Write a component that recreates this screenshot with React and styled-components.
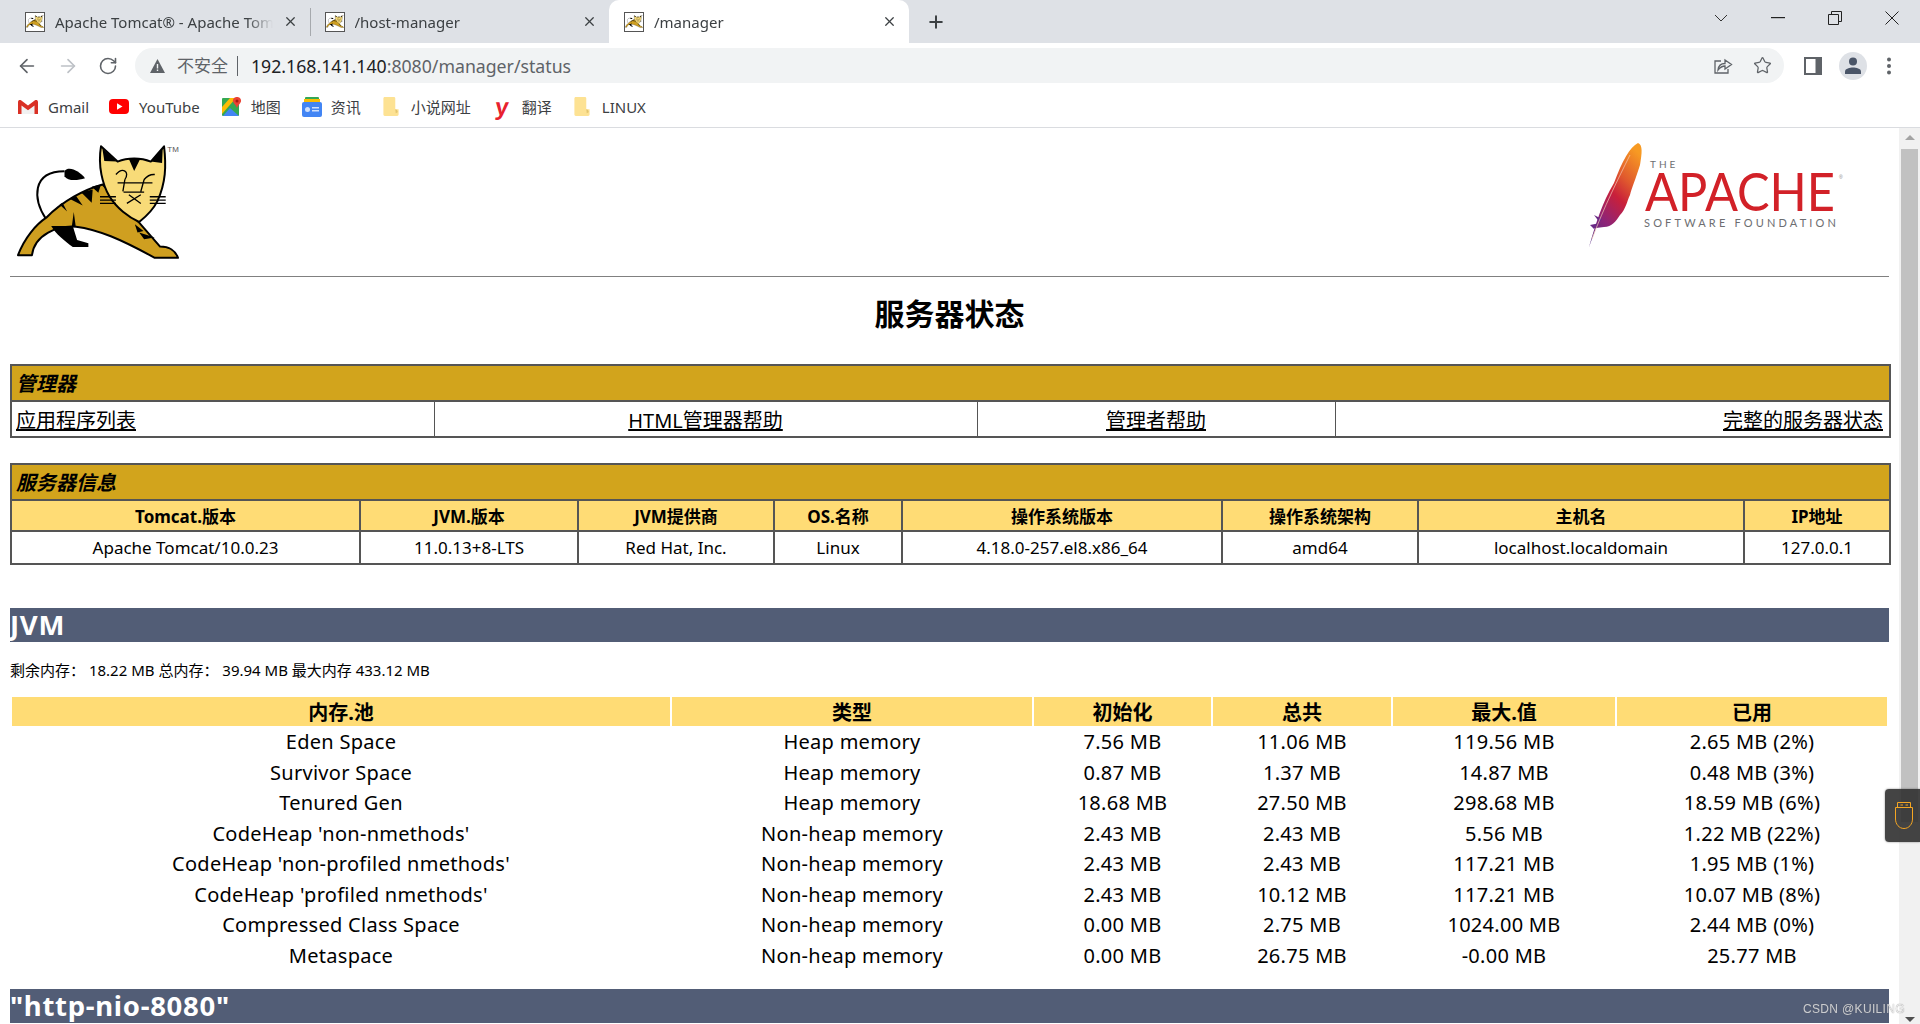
import React from 'react';
import styled, { createGlobalStyle } from 'styled-components';
import { ArrowLeft, ArrowRight, RotateCw, Star, Plus, X } from 'lucide-react';

const UI_FONT = `"Noto Sans", "Noto Sans CJK SC", sans-serif`;

const GlobalStyle = createGlobalStyle`
    html, body {
        margin: 0;
        padding: 0;
        height: 100%;
        overflow: hidden;
        background: #fff;
        font-family: ${UI_FONT};
        color: #000;
    }
`;

const Window = styled.div`
    position: relative;
    width: 1920px;
    height: 1024px;
    display: flex;
    flex-direction: column;
    overflow: hidden;
`;

/* browser chrome */
const TabStrip = styled.div`
    height: 43px;
    flex: none;
    display: flex;
    align-items: stretch;
    padding-left: 10px;
    background: #dee1e6;
`;
const Tab = styled.div`
    width: 299.5px;
    box-sizing: border-box;
    display: flex;
    align-items: center;
    padding: 0 12px 0 15px;
    gap: 10px;
    border-radius: 10px 10px 0 0;
    background: ${props => props.$active ? '#fff' : 'transparent'};
`;
const TabDivider = styled.span`
    width: 1px;
    height: 28px;
    align-self: center;
    margin-right: -1px;
    background: #a6a9ad;
`;
const Favicon = styled.span`
    width: 20px;
    height: 20px;
    flex: none;
    box-sizing: border-box;
    border: 1px solid #555;
    background: #fff;
    display: flex;
    align-items: center;
    justify-content: center;
    overflow: hidden;
`;
const TabTitle = styled.span`
    flex: 1;
    font-size: 15px;
    color: #3c4043;
    white-space: nowrap;
    overflow: hidden;
    -webkit-mask-image: linear-gradient(to right, #000 88%, transparent);
    mask-image: linear-gradient(to right, #000 88%, transparent);
`;
const TabClose = styled(X)`
    width: 15px;
    height: 15px;
    flex: none;
    color: #3c4043;
`;
const NewTab = styled(Plus)`
    width: 20px;
    height: 20px;
    margin: 12px 0 0 17px;
    color: #3c4043;
    stroke-width: 2.4;
`;
const WindowControls = styled.div`
    margin-left: auto;
    display: flex;
    align-items: flex-start;
`;
const WindowButton = styled.span`
    width: 57px;
    height: 36px;
    display: flex;
    align-items: center;
    justify-content: center;
    color: #222;
`;

const Toolbar = styled.div`
    height: 46px;
    flex: none;
    display: flex;
    align-items: center;
    box-sizing: border-box;
    padding: 0 0 1px 16px;
    background: #fff;
`;
const NavIcon = styled.span`
    width: 41px;
    display: flex;
    color: ${props => props.$off ? '#bdc1c6' : '#5f6368'};
`;
const AddressBar = styled.div`
    width: 1649px;
    height: 35px;
    margin-left: -4px;
    box-sizing: border-box;
    display: flex;
    align-items: center;
    padding: 0 12px 0 15px;
    border-radius: 18px;
    background: #f1f3f4;
`;
const Insecure = styled.span`
    margin-left: 12px;
    padding-right: 9px;
    font-size: 17px;
    color: #5f6368;
    border-right: 1px solid #5f6368;
    line-height: 20px;
`;
const Url = styled.span`
    margin-left: 13px;
    font-size: 17.7px;
    color: #5f6368;
    b {
        font-weight: 400;
        color: #202124;
    }
`;
const BarActions = styled.div`
    margin-left: auto;
    display: flex;
    align-items: center;
    gap: 20px;
    color: #5f6368;
`;
const ToolActions = styled.div`
    display: flex;
    align-items: center;
    color: #5f6368;
    margin-left: 20px;
`;
const Avatar = styled.span`
    width: 28px;
    height: 28px;
    margin: 0 19px 0 17px;
    border-radius: 50%;
    background: #dee1e6;
    display: flex;
    align-items: center;
    justify-content: center;
`;

const BookmarkBar = styled.div`
    height: 39px;
    flex: none;
    box-sizing: border-box;
    display: flex;
    align-items: center;
    padding: 0 0 3px 18px;
    background: #fff;
    border-bottom: 1px solid #dadce0;
`;
const Bookmark = styled.span`
    display: flex;
    align-items: center;
    gap: ${props => props.$gap || 10}px;
    margin-right: ${props => props.$after || 21}px;
    font-size: 15px;
    color: #3c4043;
    white-space: nowrap;
`;
const YoudaoMark = styled.span`
    width: 18px;
    text-align: center;
    font: 900 24px/20px "Liberation Sans", sans-serif;
    color: #e8212d;
    transform: skewX(-6deg);
`;

/* page */
const Viewport = styled.div`
    flex: 1;
    min-height: 0;
    display: flex;
`;
const Page = styled.main`
    flex: 1;
    min-width: 0;
    padding: 0 10px;
    overflow: hidden;
`;
const Scrollbar = styled.div`
    width: 21px;
    flex: none;
    position: relative;
    background: #f1f1f1;
    display: flex;
    flex-direction: column;
    align-items: center;
`;
const ScrollArrow = styled.span`
    width: 0;
    height: 0;
    border-left: 5px solid transparent;
    border-right: 5px solid transparent;
    margin-top: ${props => props.$down ? 'auto' : '7px'};
    margin-bottom: ${props => props.$down ? '2px' : '0'};
    ${props => props.$down
        ? 'border-top: 5px solid #505050;'
        : 'border-bottom: 5px solid #a3a3a3;'}
`;
const ScrollThumb = styled.span`
    width: 17px;
    height: 673px;
    margin-top: 9px;
    background: #c1c1c1;
`;
const LogoRow = styled.header`
    height: 148px;
    display: flex;
    justify-content: space-between;
    align-items: flex-start;
    padding: 15px 39px 0 6px;
    box-sizing: border-box;
`;
const Rule = styled.hr`
    margin: 0;
    border: 0;
    height: 1px;
    background: #808080;
`;
const Title = styled.h1`
    margin: 22px 0 35px;
    font-size: 30px;
    line-height: 30px;
    font-weight: 700;
    text-align: center;
`;
const BoxTable = styled.table`
    width: 100%;
    table-layout: fixed;
    border-collapse: collapse;
    border: 2px solid #555;
    margin-bottom: ${props => props.$after}px;
`;
const Band = styled.td`
    height: 36px;
    padding: 2px 4px 0;
    box-sizing: border-box;
    background: #d2a41c;
    border: 1px solid #555;
    border-bottom-width: 2px;
    font-size: 20px;
    font-weight: 700;
    font-style: italic;
    line-height: 1;
`;
const LinkCell = styled.td`
    height: 34px;
    padding: 0 ${props => props.$align === 'right' ? 6 : 4}px 0 4px;
    border: 1px solid #555;
    font-size: 20px;
    text-align: ${props => props.$align || 'center'};
    a {
        color: #000;
        text-decoration: underline;
    }
`;
const InfoHead = styled.td`
    height: 29px;
    padding: 0 4px;
    background: #ffdc75;
    border: 1px solid #555;
    border-width: 1px 2px 2px 1px;
    font-size: 17px;
    font-weight: 700;
    text-align: center;
`;
const InfoCell = styled.td`
    height: 31px;
    padding: 0 4px;
    border: 1px solid #555;
    border-right-width: 2px;
    font-size: 17px;
    text-align: center;
`;
const SectionBar = styled.h2`
    margin: 0;
    height: 34px;
    background: #525d76;
    color: #fff;
    font-size: 27.5px;
    line-height: 33px;
    font-weight: 700;
    letter-spacing: 0.7px;
    white-space: nowrap;
`;
const MemorySummary = styled.p`
    margin: 0;
    height: 55px;
    display: flex;
    align-items: center;
    white-space: pre;
    font-size: 15px;
`;
const MemoryTable = styled.table`
    width: 100%;
    table-layout: fixed;
    border-collapse: separate;
    border-spacing: 2px 0;
    margin-bottom: 19px;
`;
const Col = styled.col`
    width: ${props => props.$w}px;
`;
const MemoryHead = styled.th`
    height: 29px;
    padding: 0;
    background: #ffdc75;
    font-size: 20px;
    font-weight: 700;
    text-align: center;
`;
const MemoryCell = styled.td`
    height: 30.5px;
    padding: 2px 0 0;
    box-sizing: border-box;
    font-size: 20px;
    line-height: 1;
    letter-spacing: 0.28px;
    text-align: center;
    white-space: nowrap;
`;

/* things over the page */
const UsbWidget = styled.div`
    position: absolute;
    top: 789px;
    right: 0;
    width: 35px;
    height: 53px;
    display: flex;
    align-items: center;
    padding-left: 10px;
    box-sizing: border-box;
    background: rgba(48, 48, 48, 0.9);
    border-radius: 4px 0 0 4px;
    box-shadow: 0 0 2px rgba(0, 0, 0, 0.5);
`;
const Watermark = styled.div`
    position: absolute;
    right: 15px;
    bottom: 7px;
    font: 12px/16px "Liberation Sans", sans-serif;
    letter-spacing: 0.35px;
    color: #e8e8e8;
    text-shadow: 0 0 1px #555;
    opacity: 0.8;
`;

const TomcatMark = ({ width }) => (
    <svg width={width} viewBox="44 40 494 352">
        <path d="M135 270C95 210 90 125 190 125" fill="none" stroke="#000" strokeWidth="6" />
        <path d="M190 124C205 108 235 125 252 146C230 153 200 156 190 140Z" />
        <path d="M50 378C70 325 105 285 135 265C185 215 250 180 305 165L415 280L478 352C505 352 525 365 532 386L462 386C360 330 290 300 225 292C170 288 100 315 92 378Z" fill="#cf9f20" stroke="#000" strokeWidth="6" strokeLinejoin="round" />
        <path d="M150 290L215 290L228 332L262 342L262 353L215 353C190 335 165 315 150 290Z" />
        <path d="M212 292L218 248L224 292ZM240 188L275 180L272 220ZM205 208L245 228L225 200ZM175 225L198 246L184 220ZM272 172L300 165L292 190ZM415 310L462 325L430 330ZM402 285L428 305L410 310Z" />
        <path d="M300 50L350 96C380 84 420 84 450 96L490 50C497 110 495 160 470 215C455 245 435 262 415 278C385 265 345 235 325 200C305 165 290 110 300 50Z" fill="#f8db78" stroke="#000" strokeWidth="6" strokeLinejoin="round" />
        <path d="M304 56L348 96L310 94ZM486 56L450 96L484 100ZM384 88L418 88L400 124Z" />
        <path d="M345 135C365 112 388 125 372 150M372 150L366 186M430 150C440 138 452 134 462 135M430 150L420 186M350 160H455M368 188H430M378 222L420 196M384 196L420 222M297 202H345M297 212H345M297 222H345M447 202H495M447 212H495M447 222H495" fill="none" stroke="#000" strokeWidth="4" />
        <text x="500" y="66" fontSize="24" fill="#555" fontFamily="Liberation Sans, sans-serif">TM</text>
    </svg>
);

const ApacheMark = () => (
    <svg width="262" height="106" viewBox="0 0 262 106">
        <defs>
            <linearGradient id="feather" x1="0.75" y1="0" x2="0.25" y2="1">
                <stop offset="0" stopColor="#f79a23" />
                <stop offset="0.3" stopColor="#e0592d" />
                <stop offset="0.5" stopColor="#c9203a" />
                <stop offset="0.78" stopColor="#8e2477" />
                <stop offset="1" stopColor="#5a2a82" />
            </linearGradient>
        </defs>
        <path d="M1 104C8 80 14 60 26 40C34 18 42 4 50 0C55 2 54 10 52 22C47 38 44 44 42 52C39 58 38 66 32 72C28 78 24 84 16 84L8 85Z" fill="url(#feather)" />
        <path d="M6 86L2 82L12 80L6 72L14 76Z" fill="#6b2a86" />
        <path d="M4 96C16 64 30 36 42 12" fill="none" stroke="#f4c7b8" strokeWidth="0.7" />
        <text x="62" y="25" fontSize="10" letterSpacing="3" fill="#6d6e71" fontFamily="Lato, sans-serif">THE</text>
        <text x="57" y="68" fontSize="52" fontWeight="400" fill="#d22128" fontFamily="Lato, sans-serif" textLength="190" lengthAdjust="spacingAndGlyphs">APACHE</text>
        <text x="251" y="36" fontSize="5" fill="#888" fontFamily="Liberation Sans, sans-serif">®</text>
        <text x="56" y="84" fontSize="11" fill="#6d6e71" fontFamily="Lato, sans-serif" textLength="192">SOFTWARE FOUNDATION</text>
    </svg>
);

const GmailIcon = () => (
    <svg width="20" height="16" viewBox="0 0 20 16">
        <path d="M1.500 2V15H18.500V2L10 8.500Z" fill="#f1f1f1" />
        <path d="M0 3C0 .8 2 .5 3 1.300L10 6.600L17 1.300C18 .5 20 .8 20 3V15H16.500V6.500L10 11.300L3.500 6.500V15H0Z" fill="#d93025" />
    </svg>
);
const YouTubeIcon = () => (
    <svg width="20" height="15" viewBox="0 0 20 15">
        <rect width="20" height="15" rx="4" fill="#f00" />
        <path d="M8 4.200L13.500 7.500L8 10.800Z" fill="#fff" />
    </svg>
);
const MapsIcon = () => (
    <svg width="20" height="20" viewBox="0 0 20 20">
        <rect y="1" width="17" height="18" rx="1" fill="#34a853" />
        <path d="M0 10L8 1H14L0 17Z" fill="#fbbc04" />
        <path d="M8 11L17 19H1Z" fill="#4285f4" />
        <path d="M15 0C12 0 10.500 2.400 11 4.600C11.600 6.800 14 8 15 11C16 8 18.400 6.800 19 4.600C19.500 2.400 18 0 15 0Z" fill="#ea4335" />
        <circle cx="15" cy="4" r="1.500" fill="#a51c14" />
    </svg>
);
const NewsIcon = () => (
    <svg width="20" height="20" viewBox="0 0 20 20">
        <rect x="3" y="0" width="14" height="8" rx="1" fill="#34a853" />
        <rect x="2" y="2" width="16" height="6" fill="#fbbc04" />
        <rect x="0" y="5" width="20" height="15" rx="2" fill="#4285f4" />
        <rect x="3" y="10" width="5" height="5" rx="2.500" fill="#cfe0fc" />
        <rect x="10" y="10" width="7" height="1.500" fill="#cfe0fc" />
        <rect x="10" y="13" width="7" height="1.500" fill="#cfe0fc" />
    </svg>
);
const FolderIcon = () => (
    <svg width="16" height="19" viewBox="0 0 16 20">
        <path d="M1.500 0H11C12 0 12.500 .6 12.500 1.500V13H16V18.500C16 19.500 15.400 20 14.500 20H1.500C.6 20 0 19.500 0 18.500V1.500C0 .6 .6 0 1.500 0Z" fill="#fde293" />
        <path d="M12.500 13C14 13 15 14.500 15 16L13 17Z" fill="#e3c56f" />
    </svg>
);
const WarnIcon = () => (
    <svg width="15" height="14" viewBox="0 0 15 14">
        <path d="M7.500 0L15 14H0Z" fill="#5f6368" />
        <rect x="6.800" y="5" width="1.400" height="4.500" fill="#f1f3f4" />
        <rect x="6.800" y="10.500" width="1.400" height="1.500" fill="#f1f3f4" />
    </svg>
);
const ShareIcon = () => (
    <svg width="20" height="20" viewBox="0 0 20 20" fill="none" stroke="#5f6368" strokeWidth="1.300">
        <path d="M8 5H2V17H15V13" />
        <path d="M5 14C5.500 9.500 8 7.500 12 7.500V4L18.500 8.500L12 13V10C9 10 7 11.500 5 14Z" />
    </svg>
);
const SidePanelIcon = () => (
    <svg width="18" height="18" viewBox="0 0 18 18">
        <rect width="18" height="18" fill="#5f6368" />
        <rect x="2" y="2" width="9.500" height="14" fill="#fff" />
    </svg>
);
const PersonIcon = () => (
    <svg width="18" height="18" viewBox="0 0 18 18" fill="#4a5568">
        <circle cx="9" cy="4.500" r="4" />
        <path d="M1 17V14.500C1 11.500 6 10.500 9 10.500C12 10.500 17 11.500 17 14.500V17Z" />
    </svg>
);
const MenuDots = () => (
    <svg width="6" height="18" viewBox="0 0 6 18" fill="#5f6368">
        <circle cx="3" cy="2.500" r="2" />
        <circle cx="3" cy="9" r="2" />
        <circle cx="3" cy="15.500" r="2" />
    </svg>
);
const UsbIcon = () => (
    <svg width="18" height="27" viewBox="0 0 18 27" fill="none" stroke="#f5a623" strokeWidth="1">
        <path d="M.5 5.500H17.500V17C17.500 22 14 26.500 9 26.500C4 26.500 .5 22 .5 17Z" />
        <path d="M2.500 5.500V.5H15.500V5.500M5.500 3H8M10.500 3H13" />
    </svg>
);

const tabs = [
    { title: 'Apache Tomcat® - Apache Tomcat', divider: true },
    { title: '/host-manager' },
    { title: '/manager', active: true },
];

const infoColumns = [349, 218, 196, 128, 320, 196, 326, 146];
const infoHeads = ['Tomcat.版本', 'JVM.版本', 'JVM提供商', 'OS.名称', '操作系统版本', '操作系统架构', '主机名', 'IP地址'];
const infoValues = ['Apache Tomcat/10.0.23', '11.0.13+8-LTS', 'Red Hat, Inc.', 'Linux', '4.18.0-257.el8.x86_64', 'amd64', 'localhost.localdomain', '127.0.0.1'];

const memoryColumns = [658, 360, 177, 178, 222, 270];
const memoryHeads = ['内存.池', '类型', '初始化', '总共', '最大.值', '已用'];
const memoryRows = [
    ['Eden Space', 'Heap memory', '7.56 MB', '11.06 MB', '119.56 MB', '2.65 MB (2%)'],
    ['Survivor Space', 'Heap memory', '0.87 MB', '1.37 MB', '14.87 MB', '0.48 MB (3%)'],
    ['Tenured Gen', 'Heap memory', '18.68 MB', '27.50 MB', '298.68 MB', '18.59 MB (6%)'],
    ["CodeHeap 'non-nmethods'", 'Non-heap memory', '2.43 MB', '2.43 MB', '5.56 MB', '1.22 MB (22%)'],
    ["CodeHeap 'non-profiled nmethods'", 'Non-heap memory', '2.43 MB', '2.43 MB', '117.21 MB', '1.95 MB (1%)'],
    ["CodeHeap 'profiled nmethods'", 'Non-heap memory', '2.43 MB', '10.12 MB', '117.21 MB', '10.07 MB (8%)'],
    ['Compressed Class Space', 'Non-heap memory', '0.00 MB', '2.75 MB', '1024.00 MB', '2.44 MB (0%)'],
    ['Metaspace', 'Non-heap memory', '0.00 MB', '26.75 MB', '-0.00 MB', '25.77 MB'],
];

const App = () => (
    <Window>
        <GlobalStyle />
        <TabStrip>
            {tabs.map(tab => (
                <React.Fragment key={tab.title}>
                    <Tab $active={tab.active}>
                        <Favicon><TomcatMark width={18} /></Favicon>
                        <TabTitle>{tab.title}</TabTitle>
                        <TabClose strokeWidth={2} />
                    </Tab>
                    {tab.divider && <TabDivider />}
                </React.Fragment>
            ))}
            <NewTab />
            <WindowControls>
                <WindowButton>
                    <svg width="14" height="8" viewBox="0 0 14 8" fill="none" stroke="#333"><path d="M1 1L7 7L13 1" /></svg>
                </WindowButton>
                <WindowButton>
                    <svg width="14" height="2" viewBox="0 0 14 2"><rect width="14" height="1.200" fill="#222" /></svg>
                </WindowButton>
                <WindowButton>
                    <svg width="14" height="14" viewBox="0 0 14 14" fill="none" stroke="#222"><path d="M.5 3.500H10.500V13.500H.5ZM3.500 3.500V.5H13.500V10.500H10.500" /></svg>
                </WindowButton>
                <WindowButton>
                    <svg width="14" height="14" viewBox="0 0 14 14" fill="none" stroke="#222"><path d="M.5 .5L13.500 13.500M13.500 .5L.5 13.500" /></svg>
                </WindowButton>
            </WindowControls>
        </TabStrip>

        <Toolbar>
            <NavIcon><ArrowLeft size={22} strokeWidth={1.8} /></NavIcon>
            <NavIcon $off><ArrowRight size={22} strokeWidth={1.8} /></NavIcon>
            <NavIcon><RotateCw size={20} strokeWidth={1.9} /></NavIcon>
            <AddressBar>
                <WarnIcon />
                <Insecure>不安全</Insecure>
                <Url><b>192.168.141.140</b>:8080/manager/status</Url>
                <BarActions>
                    <ShareIcon />
                    <Star size={19} strokeWidth={1.6} />
                </BarActions>
            </AddressBar>
            <ToolActions>
                <SidePanelIcon />
                <Avatar><PersonIcon /></Avatar>
                <MenuDots />
            </ToolActions>
        </Toolbar>

        <BookmarkBar>
            <Bookmark $after={20}><GmailIcon />Gmail</Bookmark>
            <Bookmark $after={22}><YouTubeIcon />YouTube</Bookmark>
            <Bookmark $gap={9}><MapsIcon />地图</Bookmark>
            <Bookmark $gap={9} $after={22}><NewsIcon />资讯</Bookmark>
            <Bookmark $gap={12} $after={22}><FolderIcon />小说网址</Bookmark>
            <Bookmark $gap={11} $after={22}><YoudaoMark>y</YoudaoMark>翻译</Bookmark>
            <Bookmark $gap={12}><FolderIcon />LINUX</Bookmark>
        </BookmarkBar>

        <Viewport>
            <Page>
                <LogoRow>
                    <TomcatMark width={164} />
                    <ApacheMark />
                </LogoRow>
                <Rule />
                <Title>服务器状态</Title>

                <BoxTable $after={25}>
                    <colgroup>
                        <Col $w={423} />
                        <Col $w={543} />
                        <Col $w={358} />
                        <Col $w={555} />
                    </colgroup>
                    <tbody>
                        <tr><Band colSpan={4}>管理器</Band></tr>
                        <tr>
                            <LinkCell $align="left"><a href="#list">应用程序列表</a></LinkCell>
                            <LinkCell><a href="#html">HTML管理器帮助</a></LinkCell>
                            <LinkCell><a href="#help">管理者帮助</a></LinkCell>
                            <LinkCell $align="right"><a href="#status">完整的服务器状态</a></LinkCell>
                        </tr>
                    </tbody>
                </BoxTable>

                <BoxTable $after={43}>
                    <colgroup>
                        {infoColumns.map((w, i) => <Col key={i} $w={w} />)}
                    </colgroup>
                    <tbody>
                        <tr><Band colSpan={8}>服务器信息</Band></tr>
                        <tr>{infoHeads.map(h => <InfoHead key={h}>{h}</InfoHead>)}</tr>
                        <tr>{infoValues.map(v => <InfoCell key={v}>{v}</InfoCell>)}</tr>
                    </tbody>
                </BoxTable>

                <SectionBar>JVM</SectionBar>
                <MemorySummary>剩余内存： 18.22 MB 总内存： 39.94 MB 最大内存 433.12 MB</MemorySummary>
                <MemoryTable>
                    <colgroup>
                        {memoryColumns.map((w, i) => <Col key={i} $w={w} />)}
                    </colgroup>
                    <thead>
                        <tr>{memoryHeads.map(h => <MemoryHead key={h}>{h}</MemoryHead>)}</tr>
                    </thead>
                    <tbody>
                        {memoryRows.map(row => (
                            <tr key={row[0]}>
                                {row.map((cell, i) => <MemoryCell key={i}>{cell}</MemoryCell>)}
                            </tr>
                        ))}
                    </tbody>
                </MemoryTable>
                <SectionBar>"http-nio-8080"</SectionBar>
            </Page>
            <Scrollbar>
                <ScrollArrow />
                <ScrollThumb />
                <ScrollArrow $down />
            </Scrollbar>
        </Viewport>

        <UsbWidget><UsbIcon /></UsbWidget>
        <Watermark>CSDN @KUILING</Watermark>
    </Window>
);

export default App;
